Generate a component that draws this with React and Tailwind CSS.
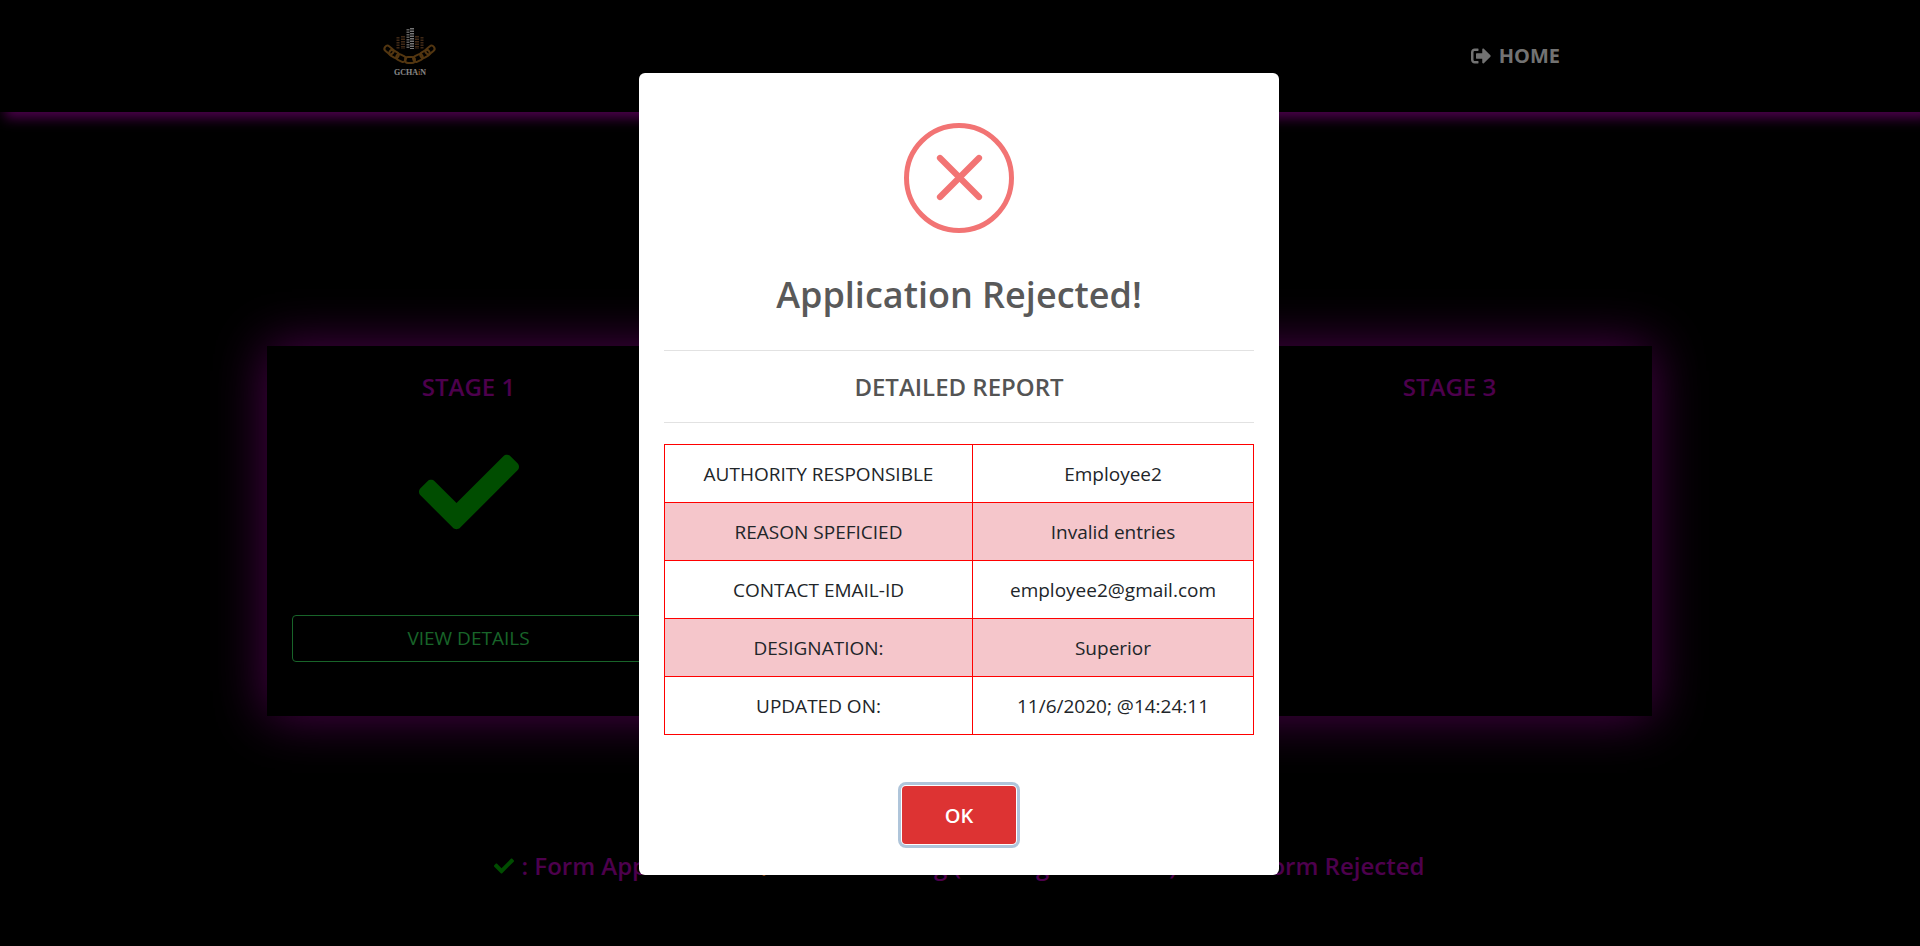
import { FaCheck, FaTimes, FaSpinner, FaSignOutAlt } from "react-icons/fa";

const report = [
  ["AUTHORITY RESPONSIBLE", "Employee2"],
  ["REASON SPEFICIED", "Invalid entries"],
  ["CONTACT EMAIL-ID", "employee2@gmail.com"],
  ["DESIGNATION:", "Superior"],
  ["UPDATED ON:", "11/6/2020; @14:24:11"],
];

const towers = [
  { x: 18, top: 13, w: 3, c: "#6b4526" },
  { x: 23, top: 12, w: 4, c: "#6b4526" },
  { x: 28, top: 5, w: 3, c: "#a0a0a0" },
  { x: 32, top: 4, w: 4, c: "#c4c4c4" },
  { x: 37, top: 12, w: 4, c: "#6b4526" },
  { x: 42, top: 13, w: 3, c: "#6b4526" },
];

const links = [
  [9, 26, 40],
  [14, 30, 30],
  [21, 34, 25],
  [30, 36, 0],
  [38, 34, -25],
  [45, 30, -30],
  [50, 26, -40],
];

function Logo() {
  return (
    <svg viewBox="0 0 60 56" className="h-14 w-15" role="img" aria-label="GCHAiN">
      {towers.map((t) => (
        <line key={t.x} x1={t.x} x2={t.x} y1={t.top} y2="25" stroke={t.c} strokeWidth={t.w} strokeDasharray="1.5 1" />
      ))}
      {links.map(([x, y, angle]) => (
        <rect
          key={x}
          x={x - 5}
          y={y - 3}
          width="10"
          height="6"
          rx="3"
          fill="none"
          stroke="#8a5a1c"
          strokeWidth="2"
          transform={`rotate(${angle} ${x} ${y})`}
        />
      ))}
      <text x="30" y="51" textAnchor="middle" fontSize="8" fontWeight="700" fill="#e0e0e0" fontFamily="Liberation Serif, serif">
        GCHA<tspan fill="#d2691e">i</tspan>N
      </text>
    </svg>
  );
}

function Stage({ title, children }) {
  return (
    <section className="flex w-[404px] flex-col px-[25px] pt-[25px] text-center">
      <h2 className="text-2xl leading-8 font-semibold text-[#800080]">{title}</h2>
      {children}
    </section>
  );
}

export default function App() {
  return (
    <div className="min-h-screen overflow-x-hidden bg-black font-['Open_Sans',sans-serif]">
      <header className="-mr-4 flex h-28 items-center justify-between bg-black pr-94 pl-95 shadow-[0_11px_12px_-5px_#800080]">
        <a href="#top" className="pb-2">
          <Logo />
        </a>
        <a href="#home" className="flex items-center gap-2 text-xl font-bold text-[#bfbfbf]">
          <FaSignOutAlt className="size-5" />
          HOME
        </a>
      </header>

      <main className="pt-[234px] pr-0.5">
        <div className="mx-auto flex h-[370px] w-[1385px] max-w-full justify-between bg-black shadow-[0_0_50px_#800080]">
          <Stage title="STAGE 1">
            <FaCheck className="mx-auto mt-[39px] size-25 text-[#008000]" />
            <button className="mt-[73px] h-[47px] rounded border border-[#28a745] text-[19px] text-[#28a745]">VIEW DETAILS</button>
          </Stage>
          <Stage title="STAGE 2">
            <FaTimes className="mx-auto mt-[39px] size-25 text-[#ff0000]" />
            <button className="mt-[73px] h-[47px] rounded border border-[#dc3545] text-[19px] text-[#dc3545]">VIEW DETAILS</button>
          </Stage>
          <Stage title="STAGE 3" />
        </div>

        <div className="mt-[132px] flex justify-center gap-10 text-2xl leading-9 font-semibold text-[#800080]">
          <span className="flex items-center gap-2">
            <FaCheck className="size-5 text-[#008000]" />: Form Approved
          </span>
          <span className="flex items-center">
            <FaSpinner className="size-5 text-[#d2691e]" />: Form Pending (Waiting for Action)
          </span>
          <span className="flex items-center gap-2">
            <FaTimes className="size-5 text-[#ff0000]" />: Form Rejected
          </span>
        </div>
      </main>

      <div className="fixed inset-0 flex items-center justify-center bg-black/40 pt-0.5 pr-0.5">
        <div role="dialog" aria-labelledby="dialog-title" className="flex w-160 flex-col items-center rounded-md bg-white px-[25px] pt-[50px] pb-[31px]">
          <svg viewBox="0 0 110 110" className="size-[110px]" fill="none" stroke="#f27474" aria-hidden="true">
            <circle cx="55" cy="55" r="52.5" strokeWidth="5" />
            <path d="M36 35 L75 74 M75 35 L36 74" strokeWidth="6.2" strokeLinecap="round" />
          </svg>
          <h1 id="dialog-title" className="mt-9 text-4xl leading-[52px] font-semibold text-[#595959]">
            Application Rejected!
          </h1>
          <h2 className="mt-[29px] w-full border-y border-[#e2e2e2] py-4 text-center text-2xl leading-[39px] font-semibold text-[#545454]">
            DETAILED REPORT
          </h2>
          <table className="mt-[21px] w-full border-collapse text-center text-[19px] text-[#212529]">
            <tbody>
              {report.map(([label, value]) => (
                <tr key={label} className="h-[58px] even:bg-[#f5c6cb]">
                  <th scope="row" className="w-[308px] border border-[#ff0000] pt-0.5 font-normal">{label}</th>
                  <td className="border border-[#ff0000] pt-0.5">{value}</td>
                </tr>
              ))}
            </tbody>
          </table>
          <button className="mt-[51px] h-[58px] w-[114px] rounded bg-[#dd3333] pt-0.5 text-xl font-semibold text-white shadow-[0_0_0_1px_#fff,0_0_0_4px_#afc5da]">
            OK
          </button>
        </div>
      </div>
    </div>
  );
}
